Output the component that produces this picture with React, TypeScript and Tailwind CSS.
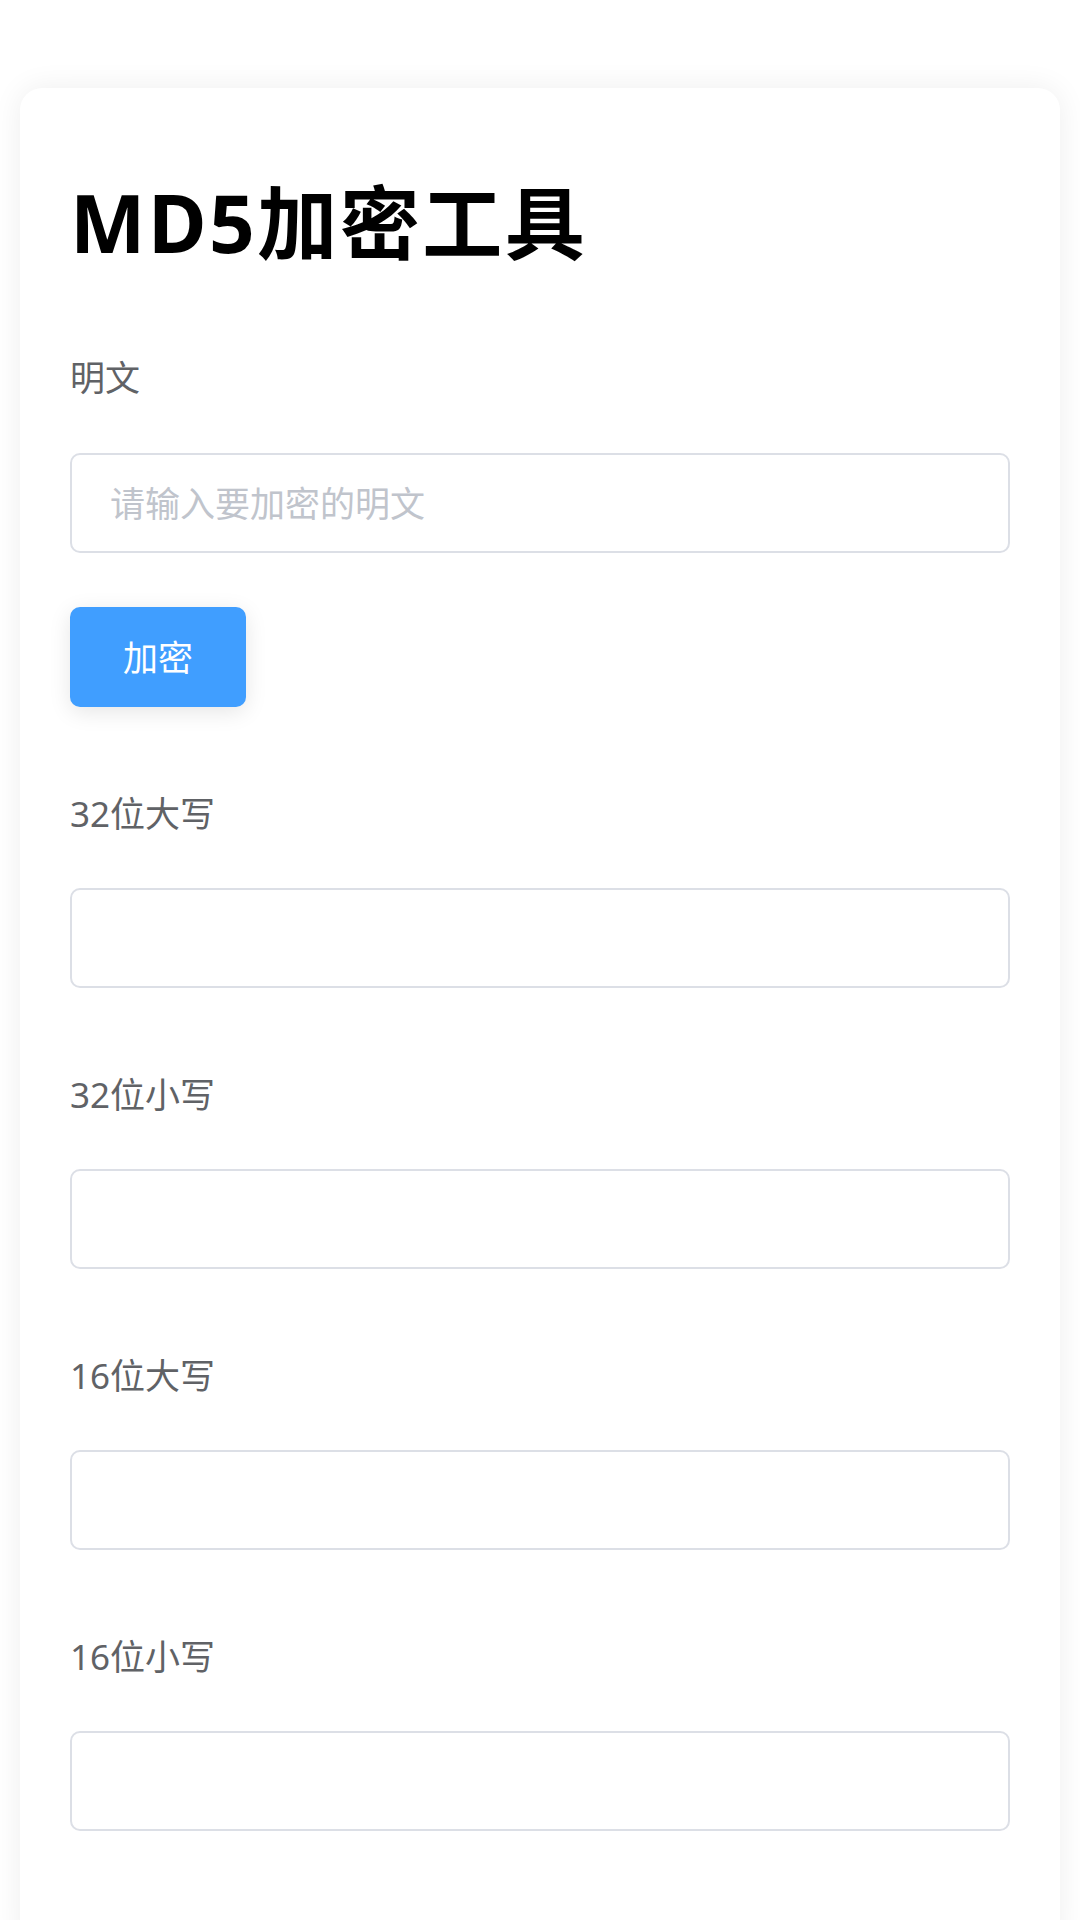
import { useState } from "react";

const fields = [
  "32位大写",
  "32位小写",
  "16位大写",
  "16位小写",
];

function App() {

  const [text, setText] =
    useState("");

  return (

    <div
      className="min-h-screen bg-white pt-[88px] px-[20px]"
      style={{ fontFamily: '"Noto Sans", "Noto Sans CJK SC", sans-serif' }}
    >

      {/* CARD */}

      <div className="bg-white rounded-[22px] shadow-[0_0_30px_rgba(0,0,0,0.07)] pt-[94px] px-[50px] pb-[120px]">

        <h1 className="text-[80px] leading-[80px] font-bold text-black tracking-[2.5px]">

          MD5加密工具

        </h1>

        <div className="mt-[98px] text-[35px] leading-[35px] text-[#606266]">

          明文

        </div>

        <input
          type="text"
          value={text}
          onChange={(e) =>
            setText(
              e.target.value
            )
          }
          placeholder="请输入要加密的明文"
          className="mt-[58px] w-full h-[100px] border-2 border-[#dcdfe6] rounded-[10px] pl-[38px] pr-[38px] text-[35px] text-[#606266] placeholder:text-[#c0c4cc] outline-none"
        />

        <button className="mt-[54px] w-[176px] h-[100px] rounded-[10px] bg-[#409eff] text-white text-[35px] leading-[35px] shadow-[0_5px_22px_rgba(0,0,0,0.1)]">

          加密

        </button>

        {fields.map(
          (label) => (

            <div
              key={label}
              className="mt-[89px]"
            >

              <div className="text-[35px] leading-[35px] text-[#606266]">

                {label}

              </div>

              <input
                type="text"
                readOnly
                className="mt-[57px] w-full h-[100px] border-2 border-[#dcdfe6] rounded-[10px] px-[38px] text-[35px] text-[#606266] outline-none"
              />

            </div>
          )
        )}

      </div>

    </div>
  );
}

export default App;
